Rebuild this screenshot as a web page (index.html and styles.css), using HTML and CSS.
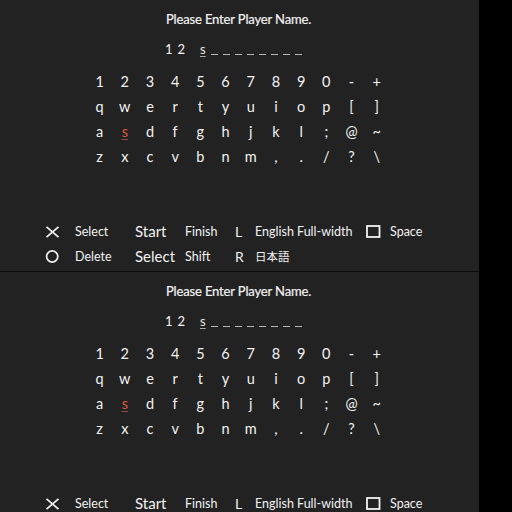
FILE: index.html
```html
<!DOCTYPE html>
<html>
<head>
<meta charset="utf-8">
<link rel="stylesheet" href="styles.css">
</head>
<body>
<div class="screen">
  <div class="title">Please Enter Player Name.</div>
  <div class="name">
    <span class="num">1 2</span>
    <span class="cur">s</span>
    <span class="dashes"><i></i><i></i><i></i><i></i><i></i><i></i><i></i><i></i></span>
  </div>
  <div class="keys">
    <span>1</span><span>2</span><span>3</span><span>4</span><span>5</span><span>6</span><span>7</span><span>8</span><span>9</span><span>0</span><span>-</span><span>+</span>
    <span>q</span><span>w</span><span>e</span><span>r</span><span>t</span><span>y</span><span>u</span><span>i</span><span>o</span><span>p</span><span>[</span><span>]</span>
    <span>a</span><span class="sel">s</span><span>d</span><span>f</span><span>g</span><span>h</span><span>j</span><span>k</span><span>l</span><span>;</span><span>@</span><span>~</span>
    <span>z</span><span>x</span><span>c</span><span>v</span><span>b</span><span>n</span><span>m</span><span>,</span><span>.</span><span>/</span><span>?</span><span>\</span>
  </div>
  <div class="legend">
    <span class="ico"><svg width="15" height="12" viewBox="0 0 15 12"><path d="M1.5 0.8 L13.5 11.2 M13.5 0.8 L1.5 11.2" stroke="#f2f2f2" stroke-width="1.7" fill="none"/></svg></span>
    <span class="sm">Select</span>
    <span class="big">Start</span>
    <span class="sm">Finish</span>
    <span class="lr">L</span>
    <span class="sm">English Full-width</span>
    <span class="ico"><svg width="15" height="13" viewBox="0 0 15 13"><rect x="1" y="1" width="12.5" height="11" stroke="#f2f2f2" stroke-width="1.8" fill="none"/></svg></span>
    <span class="sm">Space</span>

    <span class="ico"><svg width="15" height="13" viewBox="0 0 15 13"><circle cx="7.2" cy="6.5" r="5.6" stroke="#f2f2f2" stroke-width="1.7" fill="none"/></svg></span>
    <span class="sm">Delete</span>
    <span class="big">Select</span>
    <span class="sm">Shift</span>
    <span class="lr">R</span>
    <span class="sm jp">日本語</span>
    <span></span>
    <span></span>
  </div>
</div>
<div class="divider"></div>
<div class="screen">
  <div class="title">Please Enter Player Name.</div>
  <div class="name">
    <span class="num">1 2</span>
    <span class="cur">s</span>
    <span class="dashes"><i></i><i></i><i></i><i></i><i></i><i></i><i></i><i></i></span>
  </div>
  <div class="keys">
    <span>1</span><span>2</span><span>3</span><span>4</span><span>5</span><span>6</span><span>7</span><span>8</span><span>9</span><span>0</span><span>-</span><span>+</span>
    <span>q</span><span>w</span><span>e</span><span>r</span><span>t</span><span>y</span><span>u</span><span>i</span><span>o</span><span>p</span><span>[</span><span>]</span>
    <span>a</span><span class="sel">s</span><span>d</span><span>f</span><span>g</span><span>h</span><span>j</span><span>k</span><span>l</span><span>;</span><span>@</span><span>~</span>
    <span>z</span><span>x</span><span>c</span><span>v</span><span>b</span><span>n</span><span>m</span><span>,</span><span>.</span><span>/</span><span>?</span><span>\</span>
  </div>
  <div class="legend">
    <span class="ico"><svg width="15" height="12" viewBox="0 0 15 12"><path d="M1.5 0.8 L13.5 11.2 M13.5 0.8 L1.5 11.2" stroke="#f2f2f2" stroke-width="1.7" fill="none"/></svg></span>
    <span class="sm">Select</span>
    <span class="big">Start</span>
    <span class="sm">Finish</span>
    <span class="lr">L</span>
    <span class="sm">English Full-width</span>
    <span class="ico"><svg width="15" height="13" viewBox="0 0 15 13"><rect x="1" y="1" width="12.5" height="11" stroke="#f2f2f2" stroke-width="1.8" fill="none"/></svg></span>
    <span class="sm">Space</span>

    <span class="ico"><svg width="15" height="13" viewBox="0 0 15 13"><circle cx="7.2" cy="6.5" r="5.6" stroke="#f2f2f2" stroke-width="1.7" fill="none"/></svg></span>
    <span class="sm">Delete</span>
    <span class="big">Select</span>
    <span class="sm">Shift</span>
    <span class="lr">R</span>
    <span class="sm jp">日本語</span>
    <span></span>
    <span></span>
  </div>
</div>
</body>
</html>
```

FILE: styles.css
```css
html, body {
  margin: 0;
  padding: 0;
  background: #000;
  height: 512px;
  overflow: hidden;
}
body {
  font-family: "Lato", "Open Sans", "Liberation Sans", sans-serif;
  color: #f2f2f2;
}
.screen {
  width: 479px;
  height: 271px;
  background: #222222;
  display: flex;
  flex-direction: column;
  overflow: hidden;
}
.divider {
  width: 479px;
  height: 1px;
  background: #0c0c0c;
}
.title {
  margin-top: 9px;
  height: 20px;
  line-height: 20px;
  font-size: 13px;
  margin-left: 166px;
  align-self: flex-start;
  letter-spacing: -0.15px;
  -webkit-text-stroke: 0.2px #f2f2f2;
}
.name {
  margin-top: 10px;
  height: 20px;
  line-height: 20px;
  font-size: 13px;
  display: flex;
  align-items: baseline;
  padding-left: 165px;
}
.num {
  width: 35px;
  letter-spacing: 0.8px;
}
.cur {
  color: #e8e8e8;
  text-decoration: underline;
  text-decoration-color: #aaaaaa;
  text-underline-offset: 2px;
  width: 11px;
}
.dashes {
  display: flex;
  gap: 5px;
  align-self: flex-end;
  margin-bottom: 4px;
}
.dashes i {
  display: block;
  width: 7px;
  height: 1px;
  background: #b8b8b8;
}
.keys {
  margin-top: 10px;
  margin-left: 87px;
  display: grid;
  grid-template-columns: repeat(12, 25.2px);
  grid-auto-rows: 25px;
  font-size: 14.5px;
  line-height: 25px;
  text-align: center;
}
.keys .sel {
  color: #e0593a;
  text-decoration: underline;
  text-decoration-color: #9a4c3c;
  text-underline-offset: 2px;
}
.legend {
  margin-top: 50px;
  padding-left: 45px;
  display: grid;
  grid-template-columns: 30px 60px 50px 50px 20px 111px 24px auto;
  grid-auto-rows: 25px;
  line-height: 25px;
  align-items: center;
}
.ico {
  display: flex;
  align-items: center;
  height: 25px;
}
.sm {
  font-size: 12.5px;
}
.big {
  font-size: 15px;
}
.lr {
  font-size: 14px;
}
.jp {
  font-family: "Noto Sans CJK JP", sans-serif;
  font-size: 11.5px;
}
```
